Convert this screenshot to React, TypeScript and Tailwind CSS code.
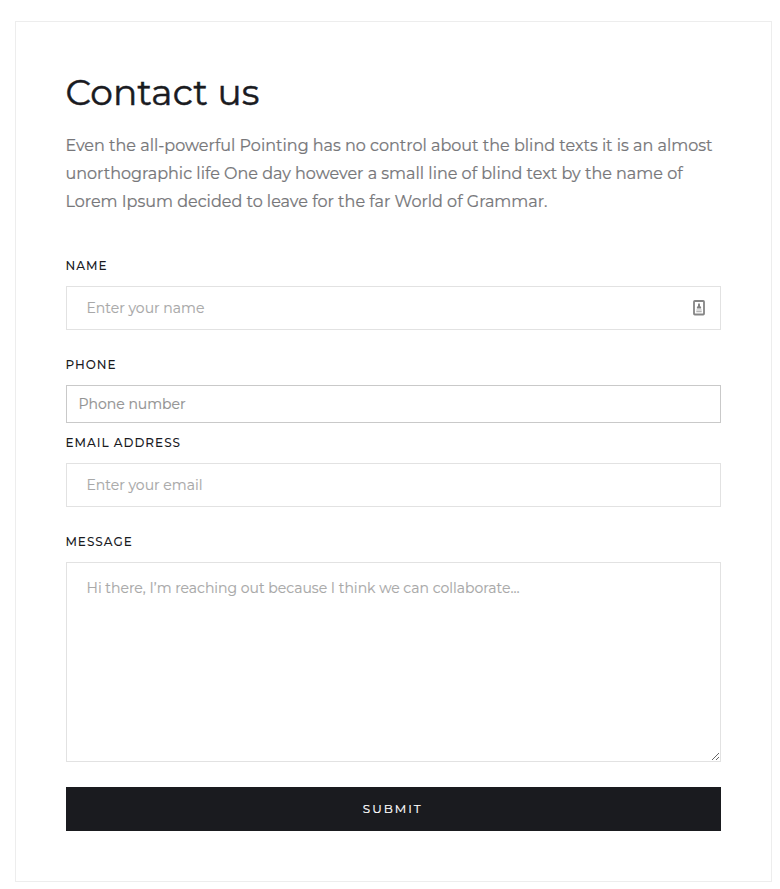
import React from "react";

const label =
  "-ml-[0.6px] mb-2.5 block h-5 text-xs leading-5 font-medium tracking-[1px] uppercase text-[#1a1b1f]";
const field =
  "block w-full rounded-none border border-[#e2e2e2] bg-white pr-5 pl-[19.5px] text-sm leading-5 outline-none [-webkit-text-stroke:0.15px_#a8a8a8] placeholder:text-[#a8a8a8]";

function AutofillIcon() {
  return (
    <svg width="12" height="16" viewBox="0 0 12 16" className="absolute top-3.5 right-4" aria-hidden="true">
      <rect x="1" y="1" width="10" height="13.5" rx="0.8" fill="#fff" stroke="#858585" strokeWidth="1.8" />
      <path d="M6 2.8 L7 4.4 V6 L8.1 7 V8.4 H3.9 V7 L5 6 V4.4 Z" fill="#808080" />
      <path d="M3.3 10h5.4M3.3 11.7h5.4" stroke="#b5b5b5" strokeWidth="1.2" />
    </svg>
  );
}

export default function App() {
  return (
    <main className="min-h-[889px] bg-white pt-[21px] pl-[15px] font-['Montserrat',sans-serif] text-[#1a1b1f]">
      <section className="h-[861px] w-[757px] border border-[#ededed] p-[50px]">
        <h2 className="-ml-[0.6px] h-[60px] text-4xl leading-10 font-normal tracking-[0.1px] [-webkit-text-stroke:0.5px_#1a1b1f]">
          Contact us
        </h2>
        <p className="-ml-[0.6px] mb-10 text-base leading-7 whitespace-nowrap text-[#77777a] [-webkit-text-stroke:0.2px_#77777a]">
          Even the all-powerful Pointing has no control about the blind texts it is an almost
          <br />
          unorthographic life One day however a small line of blind text by the name of
          <br />
          Lorem Ipsum decided to leave for the far World of Grammar.
        </p>
        <form onSubmit={(e) => e.preventDefault()}>
          <label htmlFor="name" className={label}>Name</label>
          <div className="relative mb-[25px]">
            <input id="name" type="text" placeholder="Enter your name" className={field + " h-11"} />
            <AutofillIcon />
          </div>
          <label htmlFor="phone" className={label}>Phone</label>
          <input
            id="phone"
            type="tel"
            placeholder="Phone number"
            className="mb-2.5 block h-[38px] w-full rounded-none border border-[#c9c9c9] bg-white pr-3 pl-[11.5px] text-sm outline-none [-webkit-text-stroke:0.2px_#939393] placeholder:text-[#939393]"
          />
          <label htmlFor="email" className={label}>Email Address</label>
          <input id="email" type="email" placeholder="Enter your email" className={field + " mb-[25px] h-11"} />
          <label htmlFor="message" className={label}>Message</label>
          <textarea
            id="message"
            placeholder="Hi there, I’m reaching out because I think we can collaborate…"
            className={field + " mb-[25px] h-[200px] resize pt-[15px]"}
          />
          <button
            type="submit"
            className="block h-11 w-full bg-[#1a1b1f] pr-[1.5px] pb-px text-center text-xs leading-5 tracking-[2px] text-white uppercase [-webkit-text-stroke:0.2px_#ffffff]"
          >
            Submit
          </button>
        </form>
      </section>
    </main>
  );
}
